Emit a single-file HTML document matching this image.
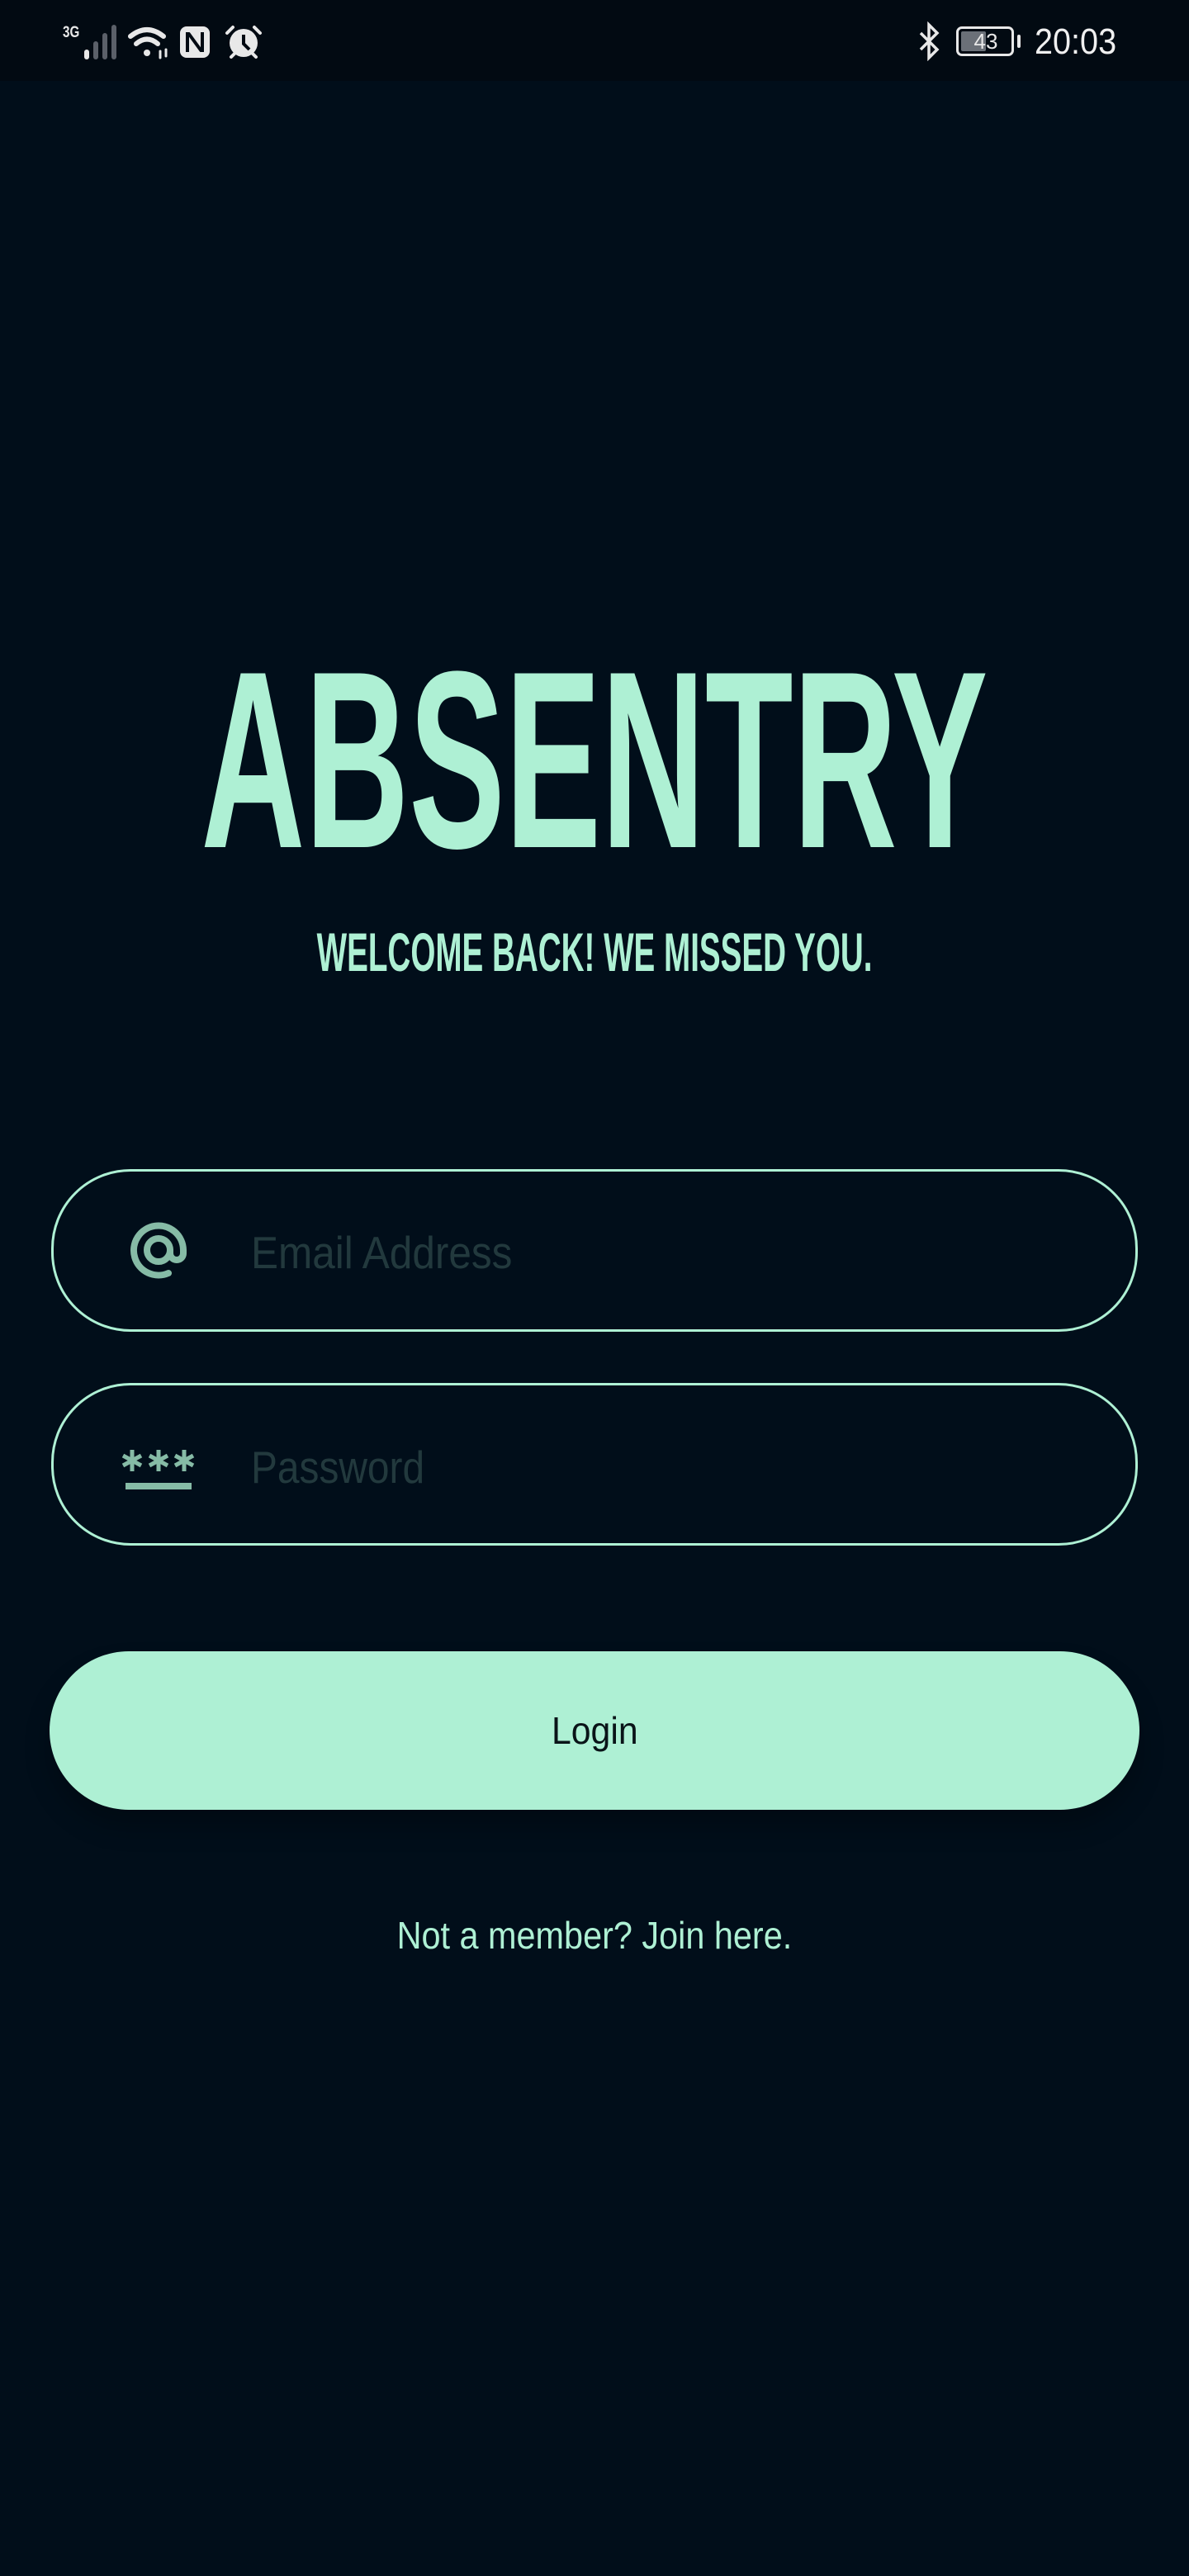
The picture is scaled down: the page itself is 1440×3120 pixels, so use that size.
<!DOCTYPE html>
<html><head><meta charset="utf-8">
<style>
html,body{margin:0;padding:0;}
body{width:1440px;height:3120px;background:#010e1a;position:relative;overflow:hidden;font-family:"Liberation Sans",sans-serif;}
.sb{position:absolute;left:0;top:0;width:1440px;height:98px;background:#020a12;}
.c{position:absolute;left:-1000px;width:3440px;text-align:center;white-space:nowrap;}
.c span{display:inline-block;transform-origin:center top;}
.box{position:absolute;left:62px;width:1310px;border:3px solid #aef0d4;border-radius:96px;box-sizing:content-box;}
.ph{position:absolute;left:304px;color:#22393d;font-size:55px;line-height:55px;white-space:nowrap;transform-origin:left top;}
</style></head><body>
<div class="sb"></div>
<div style="position:absolute;left:76px;top:30px;color:#e8e8e8;font:bold 19px/19px 'Liberation Sans',sans-serif;transform:scaleX(0.8);transform-origin:left top;">3G</div>
<svg style="position:absolute;left:100px;top:28px" width="46" height="44">
<rect x="2" y="32" width="6" height="12" rx="3" fill="#e8e8e8"/>
<rect x="13" y="22" width="6" height="22" rx="3" fill="#5b6069"/>
<rect x="24" y="12" width="6" height="32" rx="3" fill="#5b6069"/>
<rect x="35" y="2" width="6" height="42" rx="3" fill="#5b6069"/>
</svg>
<svg style="position:absolute;left:154px;top:30px" width="54" height="42" fill="none" stroke="#e8e8e8" stroke-width="6" stroke-linecap="round">
<path d="M4 14 Q24 -2 44 14"/><path d="M11 23 Q24 12 37 23"/><circle cx="24" cy="34" r="4" fill="#e8e8e8" stroke="none"/>
<path d="M40 32 v8 M47 30 v8" stroke-width="3"/>
</svg>
<svg style="position:absolute;left:218px;top:32px" width="36" height="38">
<rect x="0" y="0" width="36" height="38" rx="8" fill="#e8e8e8"/>
<path d="M9 7 v24 M27 7 v24 M10 8 L26 30" stroke="#020a12" stroke-width="4" fill="none"/>
</svg>
<svg style="position:absolute;left:272px;top:30px" width="46" height="42">
<circle cx="23" cy="22" r="17" fill="#e8e8e8"/>
<path d="M23 12 v11 l7 7" stroke="#020a12" stroke-width="4" fill="none"/>
<path d="M3 10 L10 3 M43 10 L36 3 M8 39 l5-5 M38 39 l-5-5" stroke="#e8e8e8" stroke-width="4" stroke-linecap="round"/>
</svg>
<svg style="position:absolute;left:1110px;top:26px" width="30" height="48" fill="none" stroke="#e8e8e8" stroke-width="3.5">
<path d="M5 14 L25 34 L15 44 V4 L25 14 L5 34"/>
</svg>
<div style="position:absolute;left:1158px;top:32px;width:70px;height:36px;border:3px solid #e8e8e8;border-radius:7px;box-sizing:border-box;"></div>
<div style="position:absolute;left:1164px;top:38px;width:30px;height:24px;background:#6b7078;border-radius:2px;"></div>
<div style="position:absolute;left:1162px;top:35px;width:64px;text-align:center;color:#e8e8e8;font:26px/30px 'Liberation Sans',sans-serif;">43</div>
<div style="position:absolute;left:1232px;top:42px;width:4px;height:16px;background:#e8e8e8;border-radius:2px;"></div>
<div style="position:absolute;left:1253px;top:29px;color:#f0f0f0;font:44px/44px 'Liberation Sans',sans-serif;transform:scaleX(0.9);transform-origin:left top;">20:03</div>

<div class="c" style="top:767px;font-size:306px;line-height:306px;color:#aef0d4;font-weight:bold;"><span style="transform:scaleX(0.57);">ABSENTRY</span></div>
<div class="c" style="top:1120px;font-size:66px;line-height:66px;color:#aef0d4;font-weight:bold;"><span style="transform:scaleX(0.585);">WELCOME BACK! WE MISSED YOU.</span></div>

<div class="box" style="top:1416px;height:191px;"></div>
<svg style="position:absolute;left:150px;top:1474px" width="86" height="84" fill="none" stroke="#86bba6" stroke-width="8" stroke-linecap="round">
<circle cx="42" cy="40" r="14"/>
<path d="M56 40 v4 a8 8 0 0 0 16 0 v-4 a30 30 0 1 0 -18 28"/>
</svg>
<div class="ph" style="top:1490px;transform:scaleX(0.9);">Email Address</div>

<div class="box" style="top:1675px;height:191px;"></div>
<svg style="position:absolute;left:146px;top:1754px" width="92" height="54" stroke="#86bba6" stroke-width="5">
<g id="a"><path d="M14 2 v26 M3 9 L25 21 M25 9 L3 21"/></g>
<g transform="translate(32,0)"><path d="M14 2 v26 M3 9 L25 21 M25 9 L3 21"/></g>
<g transform="translate(63,0)"><path d="M14 2 v26 M3 9 L25 21 M25 9 L3 21"/></g>
<rect x="6" y="42" width="80" height="8" fill="#86bba6" stroke="none"/>
</svg>
<div class="ph" style="top:1750px;transform:scaleX(0.87);">Password</div>

<div style="position:absolute;left:60px;top:2000px;width:1320px;height:192px;background:#aef0d4;border-radius:96px;box-shadow:0 20px 30px rgba(0,0,0,0.25);"></div>
<div class="c" style="top:2073px;font-size:46px;line-height:46px;color:#0a1418;"><span style="transform:scaleX(0.93);">Login</span></div>

<div class="c" style="top:2321px;font-size:46px;line-height:46px;color:#aef0d4;"><span style="transform:scaleX(0.9);">Not a member? Join here.</span></div>
</body></html>
